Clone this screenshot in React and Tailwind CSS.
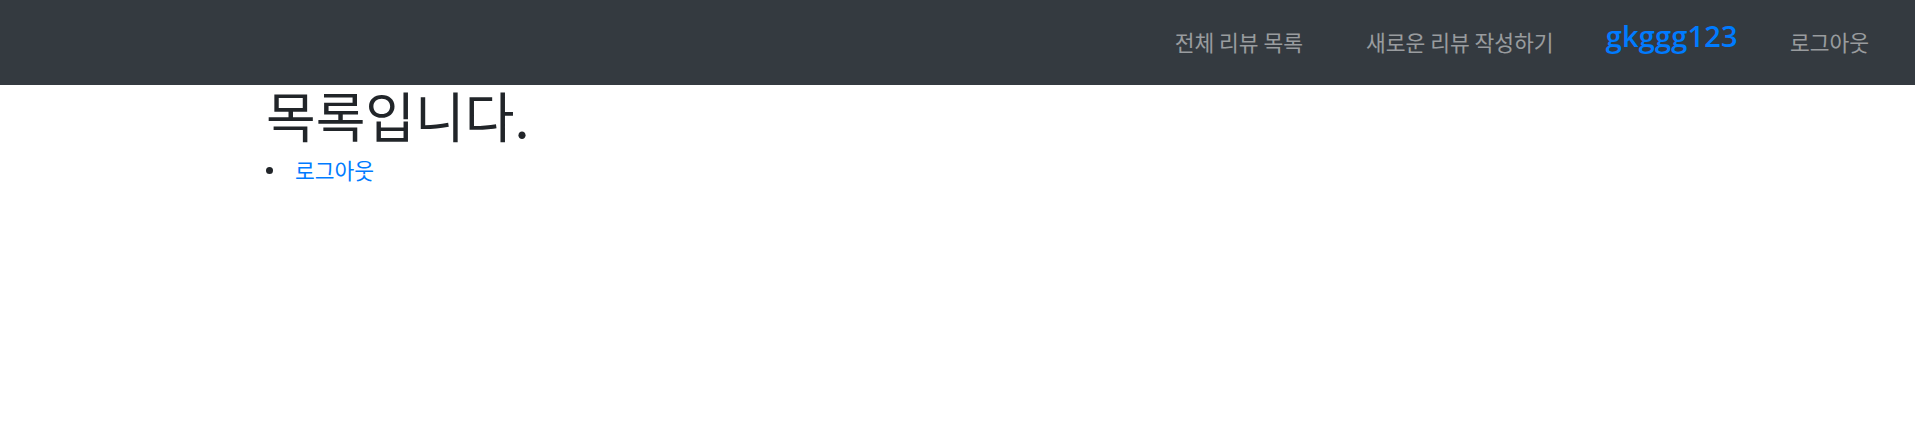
export default function App() {
  const kr = { fontFamily: '"Noto Sans CJK KR", "Noto Sans", sans-serif' };
  return (
    <div className="min-h-[448px] bg-white" style={kr}>
      <nav className="flex h-[85px] items-center justify-end bg-[#343a40] pr-[46px]">
        <a href="#" className="text-[21.5px] text-white/50">
          전체 리뷰 목록
        </a>
        <a href="#" className="ml-[63px] text-[21.5px] text-white/50">
          새로운 리뷰 작성하기
        </a>
        <a
          href="#"
          className="ml-[52px] -mt-[14px] text-[29px] font-semibold tracking-[0.2px] text-[#007bff]"
          style={{ fontFamily: '"Open Sans", "Noto Sans", sans-serif' }}
        >
          gkggg123
        </a>
        <a href="#" className="ml-[52px] text-[21.5px] text-white/50">
          로그아웃
        </a>
      </nav>
      <div className="pl-[266px]">
        <h1 className="mb-[10px] text-[54px] font-normal leading-[60px] text-[#212529]">목록입니다.</h1>
        <ul className="text-[21.5px] leading-[30px] text-[#212529]">
          <li className="flex items-center">
            <span className="h-[7px] w-[7px] rounded-full bg-[#212529]" />
            <a href="#" className="ml-[22px] text-[#007bff]">
              로그아웃
            </a>
          </li>
        </ul>
      </div>
    </div>
  );
}
